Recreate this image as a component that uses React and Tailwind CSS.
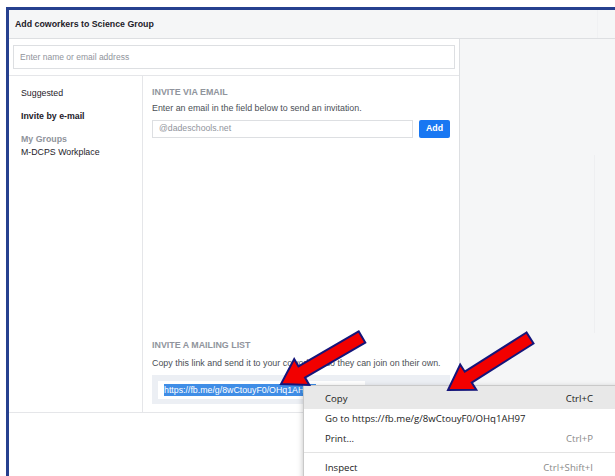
import React from 'react';

// block arrow outline from tail centre to tip
function arrowPoints([x1, y1], [x2, y2], sw = 6.5, hw = 15, hl = 24) {
  const dx = x2 - x1;
  const dy = y2 - y1;
  const len = Math.hypot(dx, dy);
  const ux = dx / len;
  const uy = dy / len;
  const nx = -uy;
  const ny = ux;
  const bx = x2 - ux * hl;
  const by = y2 - uy * hl;
  const pts = [
    [x1 + nx * sw, y1 + ny * sw],
    [bx + nx * sw, by + ny * sw],
    [bx + nx * hw, by + ny * hw],
    [x2, y2],
    [bx - nx * hw, by - ny * hw],
    [bx - nx * sw, by - ny * sw],
    [x1 - nx * sw, y1 - ny * sw],
  ];
  return pts.map((p) => p.map((v) => v.toFixed(1)).join(',')).join(' ');
}

const sidebar = [
  { label: 'Suggested', cls: 'text-[#1d2129] mb-[10px]' },
  { label: 'Invite by e-mail', cls: 'font-bold text-[#1d2129] mb-[10px]' },
  { label: 'My Groups', cls: 'font-bold text-[#90949c]' },
  { label: 'M-DCPS Workplace', cls: 'text-[#1d2129]' },
];

const menuItems = [
  { label: 'Copy', key: 'Ctrl+C', active: true, keyCls: 'text-[#222]' },
  { label: 'Go to https://fb.me/g/8wCtouyF0/OHq1AH97' },
  { label: 'Print...', key: 'Ctrl+P', keyCls: 'text-[#8a8a8a]' },
  { sep: true },
  { label: 'Inspect', key: 'Ctrl+Shift+I', keyCls: 'text-[#8a8a8a]' },
];

export default function App() {
  return (
    <div className="relative w-[615px] h-[476px] overflow-hidden bg-white pt-[7px] pl-[6px] font-['Liberation_Sans',Arial,sans-serif]">
      <div className="flex flex-col h-full border-t-[3px] border-l-[3px] border-[#26408f]">
        {/* title bar */}
        <div className="flex items-center h-[29px] shrink-0 bg-[#f5f6f7] border-b border-[#dddfe2]">
          <div className="flex-1 pl-[6px] pt-[2px] text-[8.8px] font-bold text-[#1d2129]">Add coworkers to Science Group</div>
          <div className="w-[18px] h-full border-l border-[#f0f1f3]" />
        </div>

        <div className="flex flex-1">
          {/* left dialog panel */}
          <div className="flex flex-col w-[451px] border-r border-[#dddfe2] bg-white">
            <div className="h-[37px] px-[4px] pt-[6px] border-b border-[#e5e6e9]">
              <div className="h-[24px] border border-[#dddfe2] flex items-center pl-[6px] text-[8.5px] text-[#90949c]">
                Enter name or email address
              </div>
            </div>

            <div className="flex h-[337px] border-b border-[#e5e6e9]">
              <div className="w-[134px] border-r border-[#e5e6e9] pl-[12px] pt-[11px] text-[8.8px] leading-[13px]">
                {sidebar.map((s) => (
                  <div key={s.label} className={s.cls}>{s.label}</div>
                ))}
              </div>

              <div className="flex-1 flex flex-col px-[9px] pt-[10px] pb-[8px]">
                <div className="text-[8.9px] font-bold text-[#90949c] leading-[12px]">INVITE VIA EMAIL</div>
                <div className="mt-[4px] text-[8.9px] text-[#4b4f56] leading-[12px]">
                  Enter an email in the field below to send an invitation.
                </div>
                <div className="flex items-center gap-[6px] mt-[6px]">
                  <div className="flex-1 h-[18px] border border-[#dddfe2] flex items-center pl-[6px] text-[8.7px] text-[#90949c]">
                    @dadeschools.net
                  </div>
                  <div className="w-[31px] h-[18px] rounded-[2px] bg-[#1877f2] flex items-center justify-center text-[8.8px] font-bold text-white">
                    Add
                  </div>
                </div>

                <div className="mt-auto text-[8.9px] font-bold text-[#90949c] leading-[12px]">INVITE A MAILING LIST</div>
                <div className="mt-[6px] text-[8.9px] text-[#4b4f56] leading-[12px]">
                  Copy this link and send it to your coworkers so they can join on their own.
                </div>
                <div className="mt-[6px] h-[29px] bg-[#eceff4] flex items-center pl-[6px]">
                  <div className="w-[207px] h-[18px] bg-white flex items-center pl-[6px] overflow-hidden">
                    <span className="bg-[#3f8de6] text-white text-[8.8px] leading-[12px] whitespace-nowrap pr-[2px]">
                      https://fb.me/g/8wCtouyF0/OHq1AH97
                    </span>
                  </div>
                </div>
              </div>
            </div>
          </div>

          {/* grey backdrop */}
          <div className="flex-1 bg-[#f5f6f7] pl-[134px] pt-[116px]">
            <div className="w-px h-[178px] bg-[#eeeff1]" />
          </div>
        </div>
      </div>

      {/* browser context menu */}
      <div className="absolute left-[303px] top-[385px] w-[330px] bg-white border border-[#c9c9c9] shadow-[0_2px_6px_rgba(0,0,0,0.25)] font-['Open_Sans','Noto_Sans',sans-serif] text-[9.6px] text-[#222]">
        {menuItems.map((m, i) =>
          m.sep ? (
            <div key={i} className="mt-[3px] mb-[5px] h-px bg-[#e3e3e3]" />
          ) : (
            <div
              key={i}
              className={`flex items-center justify-between h-[20px] pl-[21px] pr-[39px] ${m.active ? 'bg-[#e8e8e8] h-[23px] pt-[3px]' : ''}`}
            >
              <span>{m.label}</span>
              {m.key && <span className={m.keyCls}>{m.key}</span>}
            </div>
          )
        )}
      </div>

      {/* pointer arrows */}
      <svg className="absolute inset-0 pointer-events-none" width="615" height="476">
        <polygon points={arrowPoints([362, 337], [281, 384])} fill="#f20000" stroke="#15157a" strokeWidth="2" strokeLinejoin="miter" />
        <polygon points={arrowPoints([530, 338], [448, 390])} fill="#f20000" stroke="#15157a" strokeWidth="2" strokeLinejoin="miter" />
      </svg>
    </div>
  );
}
